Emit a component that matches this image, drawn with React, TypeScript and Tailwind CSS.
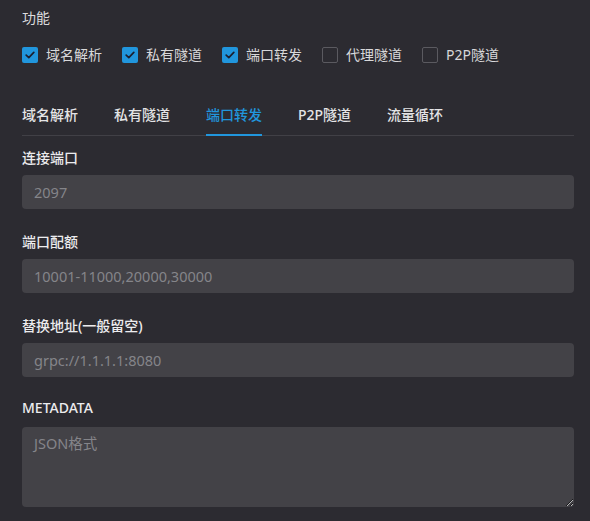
import { useState } from "react";

const features = [
  { label: "域名解析", checked: true },
  { label: "私有隧道", checked: true },
  { label: "端口转发", checked: true },
  { label: "代理隧道", checked: false },
  { label: "P2P隧道", checked: false },
];

const tabs = ["域名解析", "私有隧道", "端口转发", "P2P隧道", "流量循环"];

const fields = [
  { label: "连接端口", placeholder: "2097" },
  { label: "端口配额", placeholder: "10001-11000,20000,30000" },
  { label: "替换地址(一般留空)", placeholder: "grpc://1.1.1.1:8080" },
];

const Checkbox = ({ checked, label, onToggle }: { checked: boolean; label: string; onToggle: () => void }) => (
  <button type="button" onClick={onToggle} className="flex items-center h-5 mr-5">
    {checked ? (
      <span className="w-4 h-4 rounded-[2px] bg-[#2196dd] flex items-center justify-center">
        <svg width="10" height="8" viewBox="0 0 10 8" fill="none">
          <path d="M1.2 4.2L3.8 6.6L8.8 1.4" stroke="#1c2030" strokeWidth="1.7" strokeLinecap="round" strokeLinejoin="round" />
        </svg>
      </span>
    ) : (
      <span className="w-4 h-4 rounded-[2px] border border-[#5b5a60]" />
    )}
    <span className="ml-2 text-sm leading-5 text-[#d8d8da]">{label}</span>
  </button>
);

const App = () => {
  const [checks, setChecks] = useState(features.map((f) => f.checked));
  const [active, setActive] = useState(2);

  return (
    <div
      className="w-[590px] h-[521px] bg-[#2c2b31] pl-[22px] pr-4 overflow-hidden"
      style={{ fontFamily: '"Noto Sans", "Noto Sans CJK SC", sans-serif' }}
    >
      <div className="pt-2 h-7 text-sm leading-5 text-[#dcdcde]">功能</div>

      <div className="mt-[17px] flex items-center">
        {features.map((f, i) => (
          <Checkbox
            key={f.label}
            label={f.label}
            checked={checks[i]}
            onToggle={() => setChecks(checks.map((c, j) => (j === i ? !c : c)))}
          />
        ))}
      </div>

      <div className="mt-[40px] flex gap-9 border-b border-[#414046]">
        {tabs.map((t, i) => (
          <button
            key={t}
            type="button"
            onClick={() => setActive(i)}
            className={
              i === active
                ? "-mb-px pb-[9px] text-sm leading-5 font-medium text-[#2196dd] border-b-2 border-[#2196dd]"
                : "-mb-px pb-[9px] text-sm leading-5 font-medium text-[#e4e4e6] border-b-2 border-transparent"
            }
          >
            {t}
          </button>
        ))}
      </div>

      <div className="mt-[12px]">
        {fields.map((f, i) => (
          <div key={f.label} className={i === fields.length - 1 ? "mb-[21px]" : "mb-[23px]"}>
            <div className="h-5 text-sm leading-5 font-medium text-[#ececee]">{f.label}</div>
            <input
              placeholder={f.placeholder}
              className="mt-[7px] w-full h-[34px] rounded bg-[#434247] px-3 text-[14.5px] text-[#d0d0d0] placeholder:text-[#85858a] outline-none"
            />
          </div>
        ))}
        <div>
          <div className="h-5 text-sm leading-5 font-medium text-[#ececee]">METADATA</div>
          <textarea
            placeholder="JSON格式"
            className="mt-[9px] block w-full h-[80px] rounded bg-[#434247] px-3 py-[6px] text-[14.5px] text-[#d0d0d0] placeholder:text-[#85858a] outline-none"
          />
        </div>
      </div>
    </div>
  );
};

export default App;
